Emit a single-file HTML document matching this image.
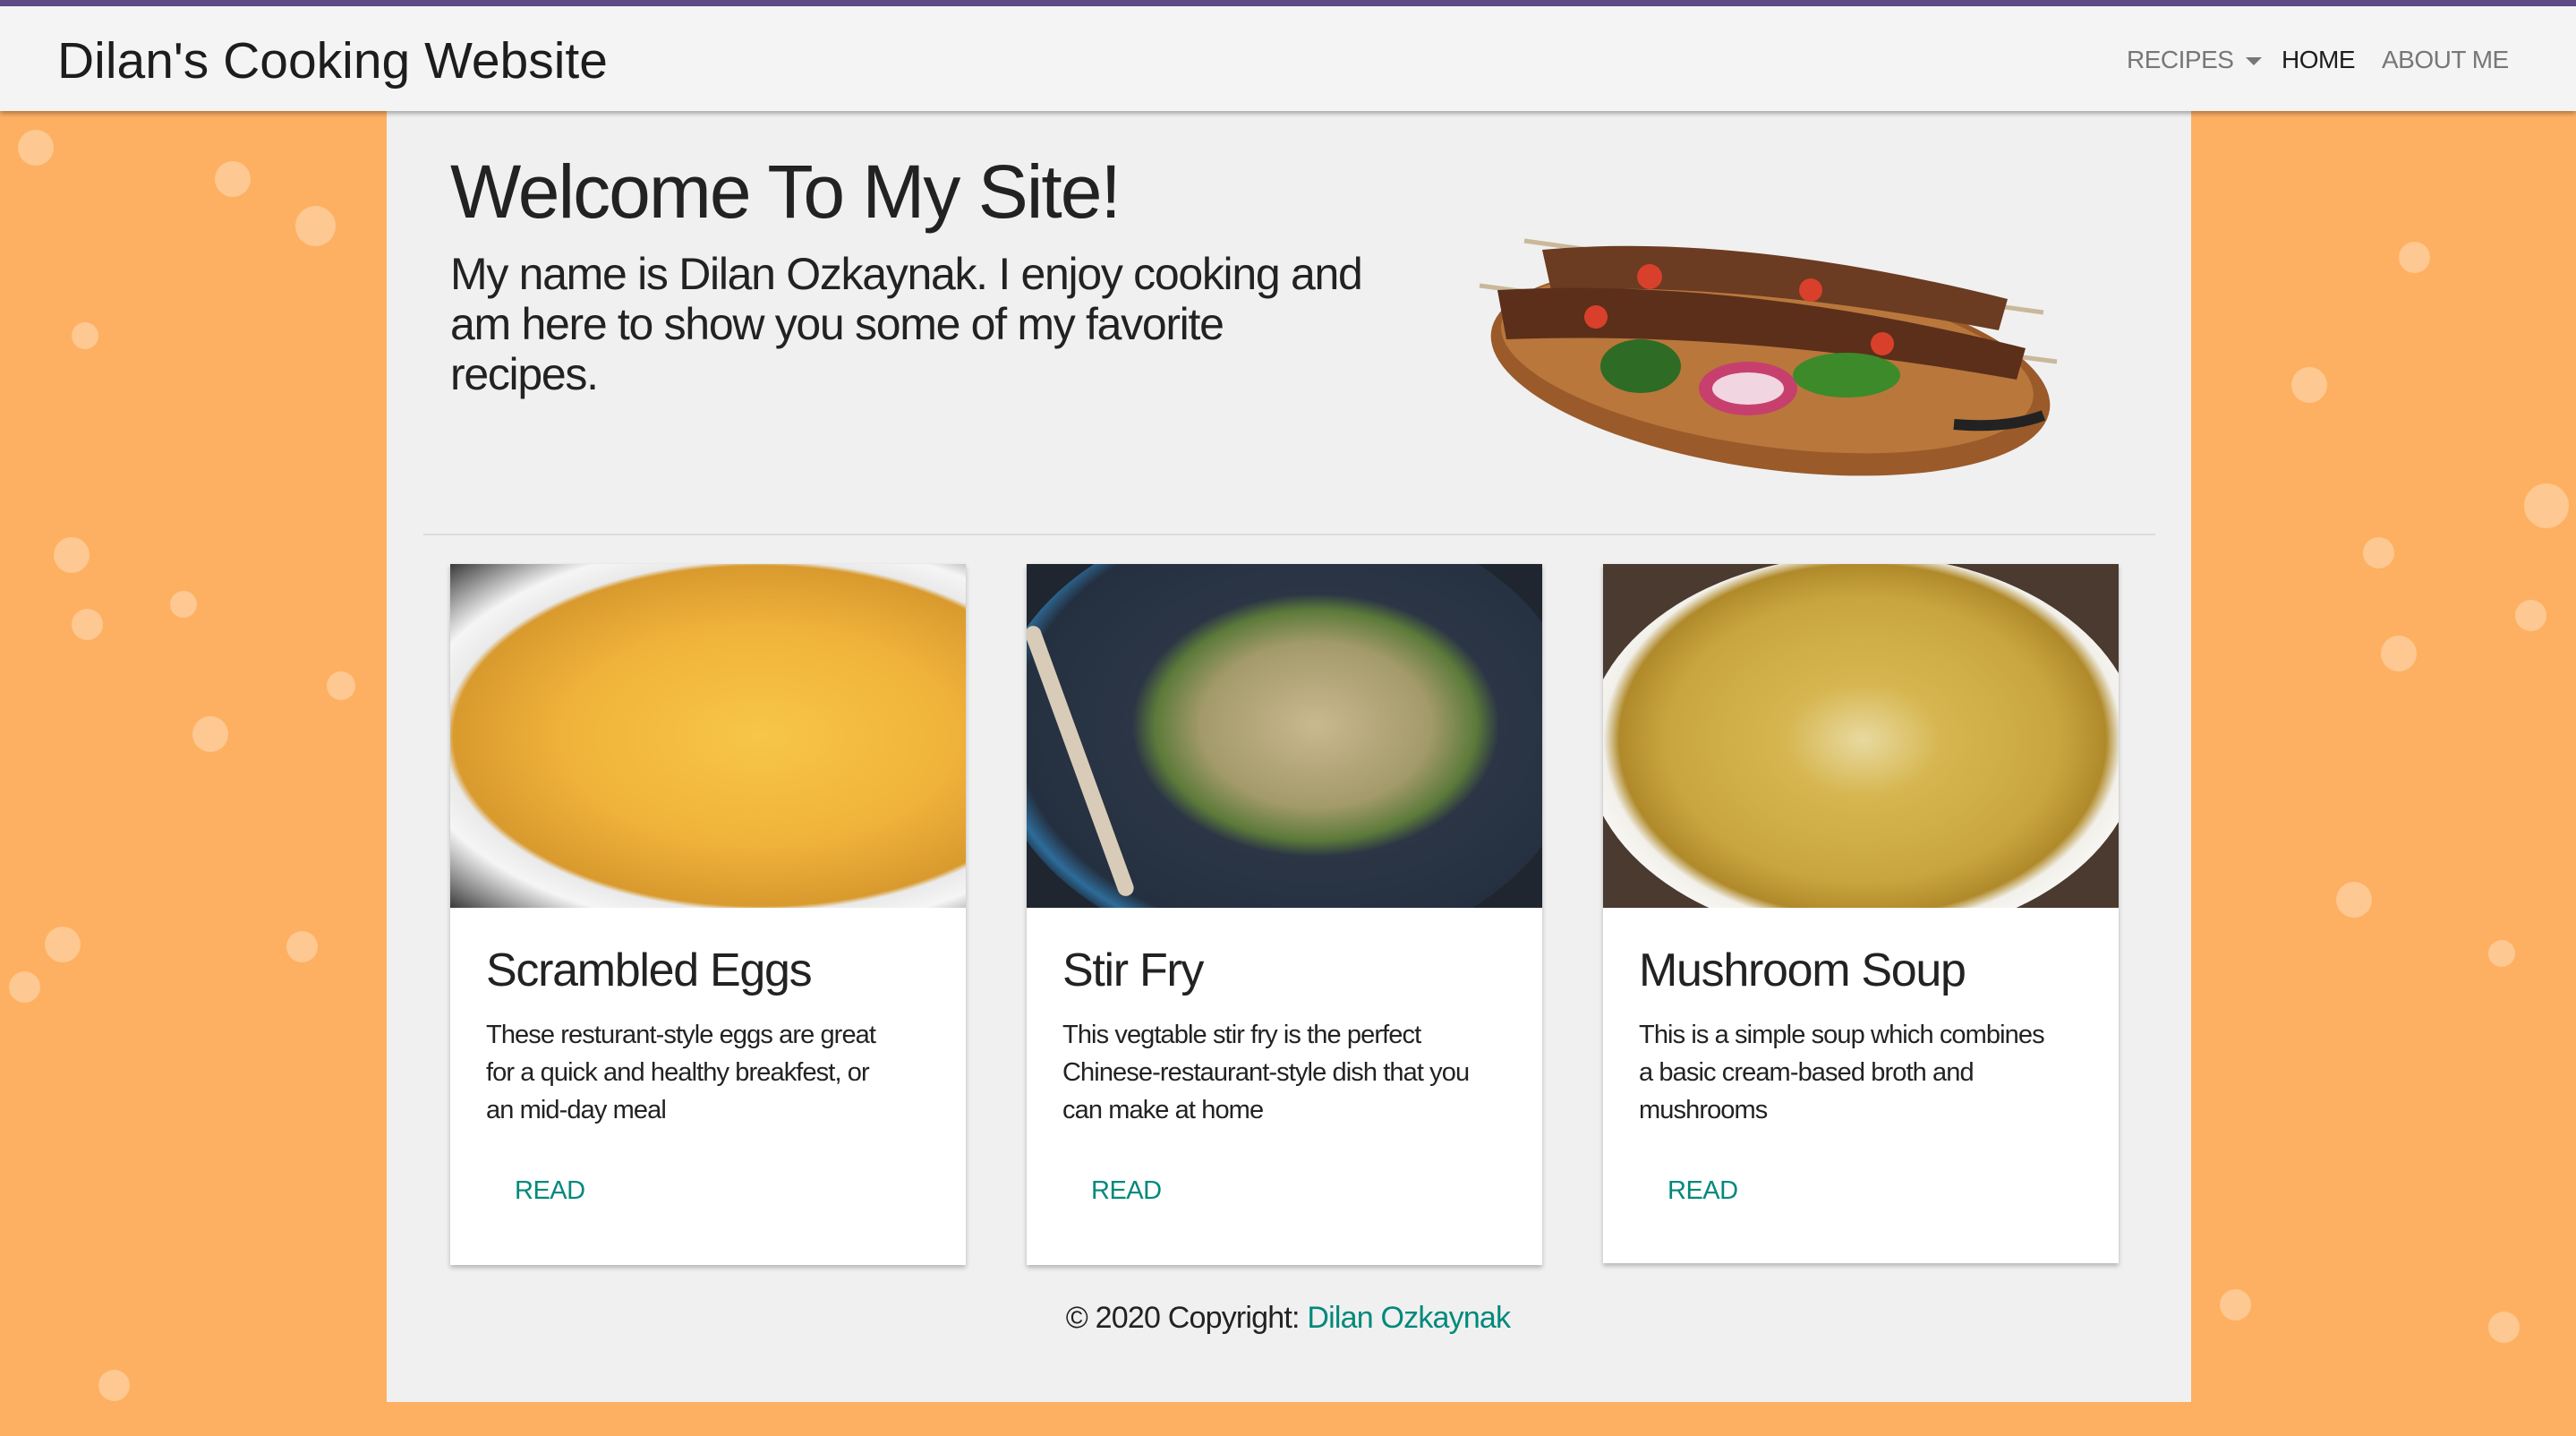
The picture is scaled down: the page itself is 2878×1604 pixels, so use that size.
<!DOCTYPE html>
<html><head><meta charset="utf-8">
<style>
*{margin:0;padding:0;box-sizing:border-box}
body{width:2878px;height:1604px;overflow:hidden;background:#fdb062;font-family:"Liberation Sans",sans-serif;position:relative;color:#212529}
.top{position:absolute;left:0;top:0;width:2878px;height:7px;background:#5e4a87}
.nav{position:absolute;left:0;top:7px;width:2878px;height:117px;background:#f4f4f4;box-shadow:0 3px 5px rgba(0,0,0,.3);z-index:3}
.brand{position:absolute;left:64px;top:28px;font-size:57px;letter-spacing:0px;color:#1d1d1d}
.nl{position:absolute;top:44px;font-size:28px;color:#777;letter-spacing:-.5px}
.panel{position:absolute;left:432px;top:124px;width:2016px;height:1442px;background:#f0f0f0}
.b{position:absolute;border-radius:50%;background:rgba(255,255,255,.3)}
h1{position:absolute;left:503px;top:166px;font-weight:normal;font-size:84px;letter-spacing:-2px;color:#222}
.intro{position:absolute;left:503px;top:278px;white-space:nowrap;font-size:50px;line-height:56px;letter-spacing:-1.3px;color:#222}
.hr{position:absolute;left:473px;top:596px;width:1935px;height:2px;background:#dcdcdc}
.card{position:absolute;top:630px;width:576px;height:783px;background:#fff;box-shadow:0 3px 5px rgba(0,0,0,.25)}
.img{height:384px;overflow:hidden;position:relative}
.card h3{position:absolute;left:40px;top:424px;font-weight:normal;font-size:52px;letter-spacing:-1.3px;color:#222}
.card p{position:absolute;left:40px;top:505px;white-space:nowrap;font-size:29px;line-height:42px;letter-spacing:-.9px;color:#222}
.read{position:absolute;left:72px;top:684px;font-size:29px;color:#00897b;letter-spacing:-.5px}
.foot{position:absolute;left:0;width:2878px;top:1453px;text-align:center;font-size:34px;letter-spacing:-.8px;color:#222}
.foot span{color:#00897b}
</style></head><body>
<div class="top"></div>
<div class="b" style="left:20px;top:145px;width:40px;height:40px"></div>
<div class="b" style="left:240px;top:180px;width:40px;height:40px"></div>
<div class="b" style="left:330px;top:230px;width:45px;height:45px"></div>
<div class="b" style="left:80px;top:360px;width:30px;height:30px"></div>
<div class="b" style="left:60px;top:600px;width:40px;height:40px"></div>
<div class="b" style="left:190px;top:660px;width:30px;height:30px"></div>
<div class="b" style="left:80px;top:680px;width:35px;height:35px"></div>
<div class="b" style="left:215px;top:800px;width:40px;height:40px"></div>
<div class="b" style="left:365px;top:750px;width:32px;height:32px"></div>
<div class="b" style="left:50px;top:1035px;width:40px;height:40px"></div>
<div class="b" style="left:10px;top:1085px;width:35px;height:35px"></div>
<div class="b" style="left:320px;top:1040px;width:35px;height:35px"></div>
<div class="b" style="left:110px;top:1530px;width:35px;height:35px"></div>
<div class="b" style="left:2680px;top:270px;width:35px;height:35px"></div>
<div class="b" style="left:2560px;top:410px;width:40px;height:40px"></div>
<div class="b" style="left:2640px;top:600px;width:35px;height:35px"></div>
<div class="b" style="left:2810px;top:670px;width:35px;height:35px"></div>
<div class="b" style="left:2660px;top:710px;width:40px;height:40px"></div>
<div class="b" style="left:2610px;top:985px;width:40px;height:40px"></div>
<div class="b" style="left:2780px;top:1050px;width:30px;height:30px"></div>
<div class="b" style="left:2480px;top:1440px;width:35px;height:35px"></div>
<div class="b" style="left:2780px;top:1465px;width:35px;height:35px"></div>
<div class="b" style="left:2820px;top:540px;width:50px;height:50px"></div>
<div class="nav">
<div class="brand">Dilan's Cooking Website</div>
<div class="nl" style="left:2376px">RECIPES <span style="display:inline-block;width:0;height:0;border-left:9px solid transparent;border-right:9px solid transparent;border-top:9px solid #777;vertical-align:middle;margin-left:6px"></span></div>
<div class="nl" style="left:2549px;color:#1d1d1d">HOME</div>
<div class="nl" style="left:2661px">ABOUT ME</div>
</div>
<div class="panel"></div>
<h1>Welcome To My Site!</h1>
<div class="intro">My name is Dilan Ozkaynak. I enjoy cooking and<br>am here to show you some of my favorite<br>recipes.</div>
<svg style="position:absolute;left:1643px;top:239px" width="670" height="302" viewBox="0 0 670 302">
<ellipse cx="335" cy="175" rx="315" ry="110" fill="#9a5a2a" transform="rotate(8 335 175)"/>
<ellipse cx="330" cy="165" rx="300" ry="95" fill="#b9773c" transform="rotate(8 335 175)"/>
<path d="M540 235 Q600 240 640 225" stroke="#222" stroke-width="12" fill="none"/>
<line x1="60" y1="30" x2="640" y2="110" stroke="#c9b89a" stroke-width="5"/>
<line x1="10" y1="80" x2="655" y2="165" stroke="#c9b89a" stroke-width="5"/>
<path d="M80 40 Q300 20 600 95 L590 130 Q300 75 90 85Z" fill="#6b3b22"/>
<path d="M30 85 Q300 70 620 150 L610 185 Q300 130 40 140Z" fill="#5b2f1a"/>
<circle cx="200" cy="70" r="14" fill="#d8402b"/><circle cx="380" cy="85" r="13" fill="#d8402b"/><circle cx="140" cy="115" r="13" fill="#d8402b"/><circle cx="460" cy="145" r="13" fill="#d8402b"/>
<ellipse cx="190" cy="170" rx="45" ry="30" fill="#2e6b25"/>
<ellipse cx="310" cy="195" rx="55" ry="30" fill="#c7406d"/>
<ellipse cx="310" cy="195" rx="40" ry="18" fill="#f1d6e2"/>
<ellipse cx="420" cy="180" rx="60" ry="25" fill="#3d8a2a"/>
</svg>
<div class="hr"></div>
<div class="card" style="left:503px"><div class="img" style="background:radial-gradient(ellipse at 60% 50%,#f7c648 0%,#f0b23a 45%,#d99a2e 70%,#eaeaea 72%,#f5f5f5 80%,#3a3a3a 100%)"></div>
<h3>Scrambled Eggs</h3><p>These resturant-style eggs are great<br>for a quick and healthy breakfest, or<br>an mid-day meal</p><div class="read">READ</div></div>
<div class="card" style="left:1147px"><div class="img" style="background:#1f2630"><div style="position:absolute;left:-40px;top:-60px;width:660px;height:500px;border-radius:50%;background:radial-gradient(ellipse at 55% 48%,#c9b98f 0%,#a39a6a 25%,#5c7a3a 35%,#2b3545 40%,#243040 65%,#2e6c9a 70%,#1b2733 74%)"></div><div style="position:absolute;left:50px;top:60px;width:18px;height:320px;background:#d8ccb8;transform:rotate(-20deg);border-radius:9px"></div></div>
<h3>Stir Fry</h3><p>This vegtable stir fry is the perfect<br>Chinese-restaurant-style dish that you<br>can make at home</p><div class="read">READ</div></div>
<div class="card" style="left:1791px;height:781px"><div class="img" style="background:#4a3a30"><div style="position:absolute;left:-20px;top:-10px;width:620px;height:430px;border-radius:50%;background:radial-gradient(ellipse at 50% 48%,#e8d9a0 0%,#d6b650 20%,#c9a53f 50%,#b08a2a 62%,#f2f0ea 66%,#fff 80%,#ddd 100%)"></div></div>
<h3>Mushroom Soup</h3><p>This is a simple soup which combines<br>a basic cream-based broth and<br>mushrooms</p><div class="read">READ</div></div>
<div class="foot">© 2020 Copyright: <span>Dilan Ozkaynak</span></div>
</body></html>
